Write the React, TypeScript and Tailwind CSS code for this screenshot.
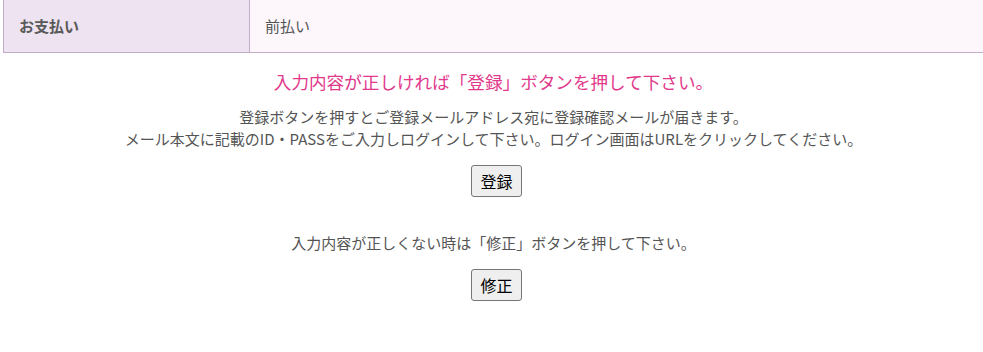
import React from "react";

const font = { fontFamily: '"Noto Sans CJK JP", "Noto Sans", sans-serif' };

function Btn({ label }: { label: string }) {
  return (
    <button
      type="button"
      className="h-[32px] px-[8px] border border-[#767676] rounded-[3px] bg-[#efefef] text-black text-[16px] leading-[24px]"
      style={font}
    >
      {label}
    </button>
  );
}

export default function App() {
  return (
    <div className="w-[983px] h-[352px] bg-white text-[#555555]" style={font}>
      <div className="ml-[3px] w-[981px]">
        <div className="flex h-[53px] border-l border-b border-[#c3adc7]">
          <div className="w-[246px] border-r border-[#c3adc7] bg-[#eee3f0] flex items-center pl-[15px] text-[15px] font-bold text-[#5a5a5a]">
            お支払い
          </div>
          <div className="flex-1 bg-[#fdf7fc] flex items-center pl-[15px] text-[15px] text-[#555555]">
            前払い
          </div>
        </div>
        <div className="flex flex-col items-center text-center">
          <p className="mt-[15px] text-[17.6px] leading-[27px] text-[#e2398c]">
            入力内容が正しければ「登録」ボタンを押して下さい。
          </p>
          <p className="mt-[11px] text-[15px] leading-[22px]">
            登録ボタンを押すとご登録メールアドレス宛に登録確認メールが届きます。
            <br />
            メール本文に記載のID・PASSをご入力しログインして下さい。ログイン画面はURLをクリックしてください。
          </p>
          <div className="mt-[15px] pl-[6px]">
            <Btn label="登録" />
          </div>
          <p className="mt-[35px] text-[15px] leading-[22px]">
            入力内容が正しくない時は「修正」ボタンを押して下さい。
          </p>
          <div className="mt-[15px] pl-[6px]">
            <Btn label="修正" />
          </div>
        </div>
      </div>
    </div>
  );
}
